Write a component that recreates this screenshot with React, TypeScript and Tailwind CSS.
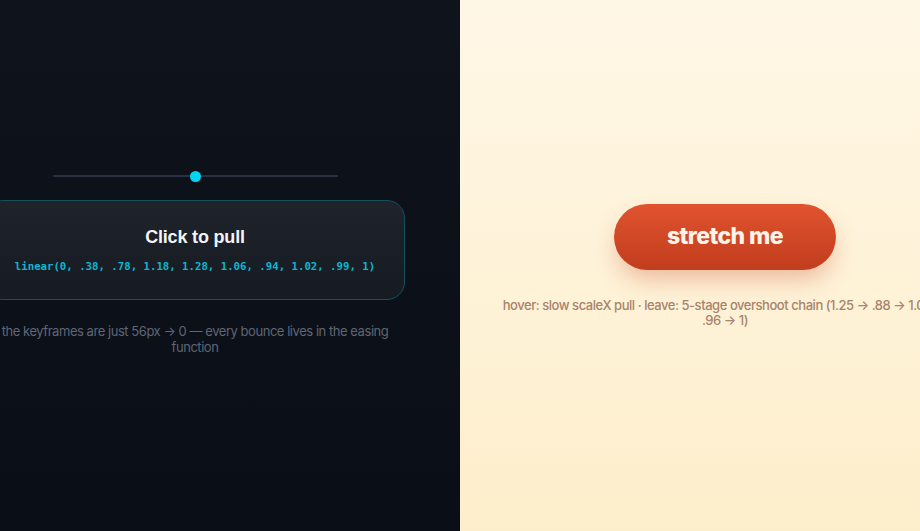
export default function App() {
  return (
    <div className="flex h-screen w-full justify-center overflow-hidden" style={{ fontFamily: '"Inter", "Noto Sans", sans-serif' }}>
      {/* dark panel */}
      <section className="flex h-full w-[530px] shrink-0 flex-col items-center justify-center bg-gradient-to-b from-[#0e131c] to-[#0a0e17] pb-[6px]">
        <div className="relative flex h-[12px] w-[285px] items-center">
          <div className="h-[2px] w-full rounded-full bg-[#2a3140]" />
          <div className="absolute left-[137px] top-[0.5px] h-[11px] w-[11px] rounded-full bg-[#06d3f0]" />
        </div>
        <button className="mt-[18px] flex h-[100px] w-[420px] flex-col items-center justify-center rounded-[18px] border border-[#15505c] bg-gradient-to-b from-[#1f232b] to-[#161a21]">
          <span className="text-[18px] font-bold leading-none tracking-[-0.01em] text-[#f3f4f6]" style={{ fontFamily: '"Liberation Sans", Arial, sans-serif' }}>
            Click to pull
          </span>
          <span className="mt-[16px] text-[10.7px] font-bold leading-none text-[#0fb5d0]" style={{ fontFamily: '"DejaVu Sans Mono", "Liberation Mono", monospace' }}>
            linear(0, .38, .78, 1.18, 1.28, 1.06, .94, 1.02, .99, 1)
          </span>
        </button>
        <p className="mt-[23px] max-w-[400px] text-center text-[13px] leading-[16px] tracking-[-0.035em] text-[#5f6675]">
          the keyframes are just 56px → 0 — every bounce lives in the easing function
        </p>
      </section>

      {/* cream panel */}
      <section className="flex h-full w-[530px] shrink-0 flex-col items-center justify-center bg-gradient-to-b from-[#fff7e6] to-[#fdeecb]">
        <button className="flex h-[66px] w-[222px] items-center justify-center rounded-full bg-gradient-to-b from-[#e0532f] to-[#c13d1d] shadow-[0_12px_24px_-4px_rgba(200,70,30,0.35)]">
          <span className="text-[23px] font-extrabold leading-none tracking-[-0.025em] text-[#fff4e8]">stretch me</span>
        </button>
        <p className="mt-[28px] max-w-[452px] text-center text-[13px] font-medium leading-[15px] tracking-[-0.035em] text-[#a9836b]">
          hover: slow scaleX pull · leave: 5-stage overshoot chain (1.25 → .88 → 1.04 → .96 → 1)
        </p>
      </section>
    </div>
  );
}
